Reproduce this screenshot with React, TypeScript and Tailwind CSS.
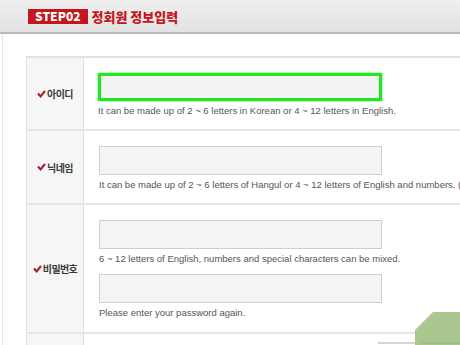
import React from "react";

const ko = { fontFamily: '"Noto Sans CJK KR", "Noto Sans", sans-serif' };
const en = { fontFamily: '"Liberation Sans", Arial, sans-serif' };

function Check() {
  return (
    <svg width="9" height="8" viewBox="0 0 9 8" className="mr-[1px] shrink-0">
      <path d="M1 3.5 L3.6 6.4 L8 1" fill="none" stroke="#a3173b" strokeWidth="2" />
    </svg>
  );
}

function Label({ text }: { text: string }) {
  return (
    <div className="w-[57px] shrink-0 bg-[#f6f6f6] border-r border-[#dedede] flex items-center justify-center">
      <div className="flex items-center text-[10px] font-semibold tracking-[-0.6px] text-[#3a3a3a]" style={ko}>
        <Check />
        {text}
      </div>
    </div>
  );
}

function Field({ active = false }: { active?: boolean }) {
  return active ? (
    <div className="w-[284px] h-[28px] bg-[#f3f3f3] border-[3px] border-[#22e61e] shadow-[0_0_2px_#5be85b]" />
  ) : (
    <div className="w-[283px] h-[29px] bg-[#f4f4f4] border border-[#cfcfcf]" />
  );
}

function Hint({ children }: { children: React.ReactNode }) {
  return (
    <div className="mt-[4px] text-[9.5px] leading-[12px] text-[#555] whitespace-nowrap" style={en}>
      {children}
    </div>
  );
}

export default function App() {
  return (
    <div className="w-[460px] h-[345px] overflow-hidden bg-white relative">
      {/* header */}
      <div className="h-[34px] bg-gradient-to-b from-[#efefef] to-[#e2e2e2] border-b-2 border-[#b9b9b9] flex items-center pl-[28px]">
        <div className="h-[15px] px-[7px] bg-[#c5161d] text-white text-[12px] font-black flex items-center leading-none" style={ko}>
          STEP02
        </div>
        <div className="ml-[4px] text-[13px] font-black text-[#c5161d] leading-none" style={ko}>
          정회원 정보입력
        </div>
      </div>

      {/* body */}
      <div className="ml-[2px] border-l border-[#e6e6e6] h-full pt-[22px] pl-[23px]">
        <div className="w-[520px] border-t-2 border-l border-[#e2e2e2]">
          <div className="flex border-b-2 border-[#e6e6e6]">
            <Label text="아이디" />
            <div className="pl-[14px] pt-[15px] pb-[12px]">
              <Field active />
              <Hint>It can be made up of 2 ~ 6 letters in Korean or 4 ~ 12 letters in English.</Hint>
            </div>
          </div>
          <div className="flex border-b-2 border-[#e6e6e6]">
            <Label text="닉네임" />
            <div className="pl-[15px] pt-[15px] pb-[12px]">
              <Field />
              <Hint>
                It can be made up of 2 ~ 6 letters of Hangul or 4 ~ 12 letters of English and numbers. (
              </Hint>
            </div>
          </div>
          <div className="flex border-b-2 border-[#e6e6e6]">
            <Label text="비밀번호" />
            <div className="pl-[15px] pt-[15px] pb-[13px]">
              <Field />
              <Hint>6 ~ 12 letters of English, numbers and special characters can be mixed.</Hint>
              <div className="mt-[9px]">
                <Field />
              </div>
              <Hint>Please enter your password again.</Hint>
            </div>
          </div>
          <div className="flex h-[40px]">
            <div className="w-[57px] shrink-0 bg-[#f6f6f6] border-r border-[#dedede]" />
            <div className="flex-1" />
          </div>
        </div>
      </div>

      {/* green decoration at bottom right */}
      <svg className="absolute right-0 bottom-0" width="82" height="33" viewBox="0 0 82 33">
        <line x1="0" y1="31" x2="40" y2="31" stroke="#c8c8c8" strokeWidth="1.5" />
        <polygon points="55,0 82,0 82,33 37,33 37,18" fill="#a9c78f" />
        <line x1="42" y1="31" x2="82" y2="31" stroke="#9ab882" strokeWidth="1" />
      </svg>
    </div>
  );
}
